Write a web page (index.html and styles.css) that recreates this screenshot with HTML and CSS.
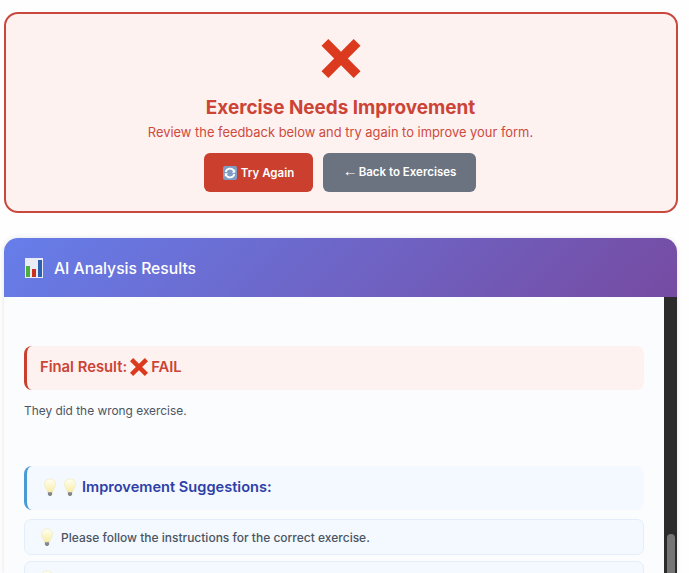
FILE: index.html
```html
<!DOCTYPE html>
<html lang="en">
<head>
<meta charset="utf-8">
<title>Exercise Results</title>
<link rel="stylesheet" href="styles.css">
</head>
<body>
<svg class="defs" width="0" height="0" aria-hidden="true">
  <defs>
    <linearGradient id="bulbGlass" x1="0" y1="0" x2="0" y2="1">
      <stop offset="0" stop-color="#fffff4"/>
      <stop offset="1" stop-color="#f8eca6"/>
    </linearGradient>
    <symbol id="bulb" viewBox="0 0 14 20">
      <path d="M7 1C3.600 1 1.200 3.400 1.200 6.500c0 3.300 2.700 5 3.300 8.300h5c.6-3.300 3.300-5 3.300-8.300C12.800 3.400 10.400 1 7 1z" fill="url(#bulbGlass)" stroke="#efe6ac" stroke-width=".6"/>
      <path d="M4.800 15h4.400v2.200L8 19H6l-1.200-1.800z" fill="#85858a"/>
    </symbol>
    <symbol id="cross" viewBox="0 0 40 40">
      <path d="M7 0 20 13 33 0 40 7 27 20 40 33 33 40 20 27 7 40 0 33 13 20 0 7z" fill="#dc3a1f"/>
    </symbol>
  </defs>
</svg>
<main class="page">
  <section class="banner">
    <svg class="banner-icon"><use href="#cross"/></svg>
    <h1 class="banner-title">Exercise Needs Improvement</h1>
    <p class="banner-text">Review the feedback below and try again to improve your form.</p>
    <div class="actions">
      <a class="btn btn-retry">
        <svg class="retry-icon" viewBox="0 0 14 14" aria-hidden="true">
          <rect width="14" height="14" rx="2" fill="#7f9cc4"/>
          <path d="M2.700 6A4.400 4.400 0 0 1 11 5.200" fill="none" stroke="#fff" stroke-width="1.800"/>
          <path d="M11.300 8A4.400 4.400 0 0 1 3 8.800" fill="none" stroke="#fff" stroke-width="1.800"/>
          <path d="M12.200 3.200v3.600H8.800zM1.800 10.800V7.200h3.400z" fill="#fff"/>
        </svg>
        Try Again
      </a>
      <a class="btn btn-back"><span class="arrow">←</span> Back to Exercises</a>
    </div>
  </section>

  <section class="results">
    <header class="results-head">
      <svg class="chart-icon" viewBox="0 0 18 20" aria-hidden="true">
        <rect width="18" height="20" fill="#e9ecf5"/>
        <rect x="1" y="8" width="4" height="11" fill="#4cae3f"/>
        <rect x="7" y="11" width="4" height="8" fill="#c8331f"/>
        <rect x="13" y="2" width="4" height="17" fill="#2c5fb0"/>
      </svg>
      <h2 class="results-title">AI Analysis Results</h2>
    </header>
    <div class="results-view">
      <div class="results-body">
        <div class="callout callout-fail">
          <h3 class="callout-title fail-title">Final Result: <svg class="inline-cross"><use href="#cross"/></svg> FAIL</h3>
        </div>
        <p class="reason">They did the wrong exercise.</p>
        <div class="callout callout-tips">
          <h3 class="callout-title tips-title">
            <svg class="head-bulb"><use href="#bulb"/></svg>
            <svg class="head-bulb"><use href="#bulb"/></svg>
            <span>Improvement Suggestions:</span>
          </h3>
        </div>
        <div class="tip">
          <svg class="tip-bulb"><use href="#bulb"/></svg>
          <span>Please follow the instructions for the correct exercise.</span>
        </div>
        <div class="tip">
          <svg class="tip-bulb"><use href="#bulb"/></svg>
        </div>
      </div>
      <div class="scrollbar"><div class="thumb"></div></div>
    </div>
  </section>
</main>
</body>
</html>
```
FILE: styles.css
```css
* { box-sizing: border-box; }
html, body { margin: 0; height: 100%; overflow: hidden; }
body {
  background: #fefefe;
  font-family: Inter, "Liberation Sans", sans-serif;
  color: #4b5563;
}
.defs { display: block; height: 0; }
.page {
  height: 573px;
  overflow: hidden;
  padding: 12px 11.500px 0 3.500px;
}
.banner {
  height: 201px;
  display: flex;
  flex-direction: column;
  align-items: center;
  padding-top: 25px;
  background: #fef2f1;
  border: 2px solid #c9483c;
  border-radius: 14px;
  margin-bottom: 25px;
}
.banner-icon { width: 40px; height: 39px; display: block; }
.banner-title {
  margin: 18px 0 0;
  font-size: 18.900px;
  line-height: 24px;
  font-weight: 700;
  color: #cb4435;
}
.banner-text {
  margin: 3px 0 0;
  font-size: 12.900px;
  line-height: 20px;
  color: #cf4a3d;
}
.actions { display: flex; gap: 10px; margin: 10px 1px 0 0; }
.btn {
  height: 39px;
  display: flex;
  align-items: center;
  justify-content: center;
  border-radius: 6px;
  color: #fff;
  font-size: 11.500px;
  font-weight: 600;
}
.btn-retry { width: 109px; gap: 4px; background: #ca3f2d; padding-top: 1px; }
.retry-icon { width: 14px; height: 14px; }
.btn-back { width: 153px; gap: 1px; background: #6b7280; padding-bottom: 2px; }
.arrow {
  font-family: "Liberation Sans", sans-serif;
  font-size: 15px;
  line-height: 15px;
  font-weight: 400;
  padding-bottom: 2px;
}
.results {
  height: 335px;
  margin-left: .5px;
  margin-right: .5px;
  border-radius: 14px 14px 0 0;
  overflow: hidden;
  background: #fbfcfe;
  box-shadow: 0 0 5px rgba(60, 60, 90, .14);
}
.results-head {
  height: 59px;
  display: flex;
  align-items: center;
  gap: 11px;
  padding: 1px 20px 0 21px;
  background: linear-gradient(135deg, #667eea, #764ba2);
}
.chart-icon { width: 18px; height: 20px; }
.results-title {
  margin: 0;
  color: #fff;
  font-size: 15.700px;
  font-weight: 500;
}
.results-view { display: flex; height: 276px; }
.results-body {
  flex: 1;
  min-width: 0;
  padding: 49px 20px 0;
  overflow: hidden;
}
.scrollbar {
  width: 13px;
  flex: none;
  background: #2b2b2b;
  display: flex;
  align-items: flex-end;
  justify-content: center;
}
.thumb {
  width: 8px;
  height: 39px;
  background: #757575;
  border-radius: 4px 4px 0 0;
}
.callout {
  height: 44px;
  display: flex;
  align-items: center;
  border-radius: 8px;
  border-left: 3px solid;
  padding-left: 13px;
  padding-bottom: 2px;
}
.callout-fail { background: #fef2f1; border-color: #c9402f; }
.callout-tips { background: #f3f9fe; border-color: #4a9ad6; padding-left: 16px; }
.callout-title {
  margin: 0;
  display: flex;
  align-items: center;
  font-weight: 600;
}
.fail-title { color: #cb4435; gap: 3px; font-size: 14.800px; }
.tips-title { color: #2f3fa8; font-size: 14.600px; }
.inline-cross { width: 18px; height: 18px; }
.head-bulb { width: 14px; height: 19px; margin-right: 6px; }
.head-bulb + .head-bulb { margin-right: 5px; }
.reason {
  margin: 12px 0 46px;
  font-size: 11.900px;
  line-height: 18px;
}
.tip {
  height: 36px;
  display: flex;
  align-items: center;
  gap: 7px;
  margin-top: 9px;
  padding-left: 15px;
  background: #f3f9fe;
  border: 1px solid #e3eefa;
  border-radius: 7px;
  font-size: 12px;
  font-weight: 500;
}
.tip + .tip { margin-top: 6px; }
.tip-bulb { width: 14px; height: 19px; flex: none; }
```
